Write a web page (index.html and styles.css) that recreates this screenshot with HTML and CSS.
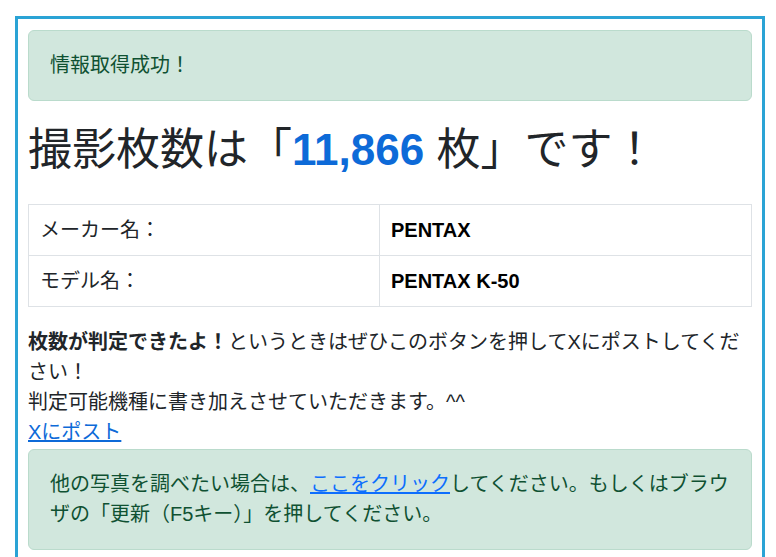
FILE: index.html
```html
<!DOCTYPE html>
<html lang="ja">
<head>
<meta charset="utf-8">
<title>撮影枚数</title>
<link rel="stylesheet" href="styles.css">
</head>
<body>
<div class="wrap">
  <div class="alert">情報取得成功！</div>
  <h1 class="title">撮影枚数は「<span class="count">11,866</span> 枚」です！</h1>
  <table class="info">
    <tr><td class="label">メーカー名：</td><td class="value">PENTAX</td></tr>
    <tr><td class="label">モデル名：</td><td class="value">PENTAX K-50</td></tr>
  </table>
  <p class="note"><strong>枚数が判定できたよ！</strong>というときはぜひこのボタンを押してXにポストしてください！<br>判定可能機種に書き加えさせていただきます。^^<br><a href="#" class="link">Xにポスト</a></p>
  <div class="alert">他の写真を調べたい場合は、<a href="#" class="link">ここをクリック</a>してください。もしくはブラウザの「更新（F5キー）」を押してください。</div>
</div>
</body>
</html>
```

FILE: styles.css
```css
html, body {
  margin: 0;
  padding: 0;
  background: #ffffff;
}
body {
  font-family: "Liberation Sans", "Noto Sans CJK JP", sans-serif;
  font-size: 20px;
  line-height: 1.5;
  color: #212529;
}
.wrap {
  margin: 16px 11px 0 15px;
  width: 750px;
  box-sizing: border-box;
  border: 3px solid #2aa3d5;
  padding: 11px 10px 20px 10px;
}
.alert {
  background: #d1e7dd;
  border: 1px solid #badbcc;
  color: #0f5132;
  border-radius: 6px;
  padding: 19px 21px 20px 21px;
  line-height: 30px;
}
.alert .link {
  color: #0d6efd;
}
.title {
  font-size: 44px;
  font-weight: normal;
  line-height: 1.2;
  margin: 23px 0 27px 0;
  color: #212529;
}
.count {
  color: #0d6ad8;
  font-weight: bold;
}
.info {
  width: 100%;
  border-collapse: collapse;
}
.info td {
  border: 1px solid #dee2e6;
  padding: 10px 11px;
  line-height: 30px;
}
.info .label {
  width: 328px;
}
.info .value {
  font-weight: bold;
  color: #000;
}
.note {
  margin: 20px 0 2px 0;
  line-height: 30px;
}
.note strong {
  font-weight: bold;
}
.link {
  color: #0d6ad8;
  text-decoration: underline;
}
```
